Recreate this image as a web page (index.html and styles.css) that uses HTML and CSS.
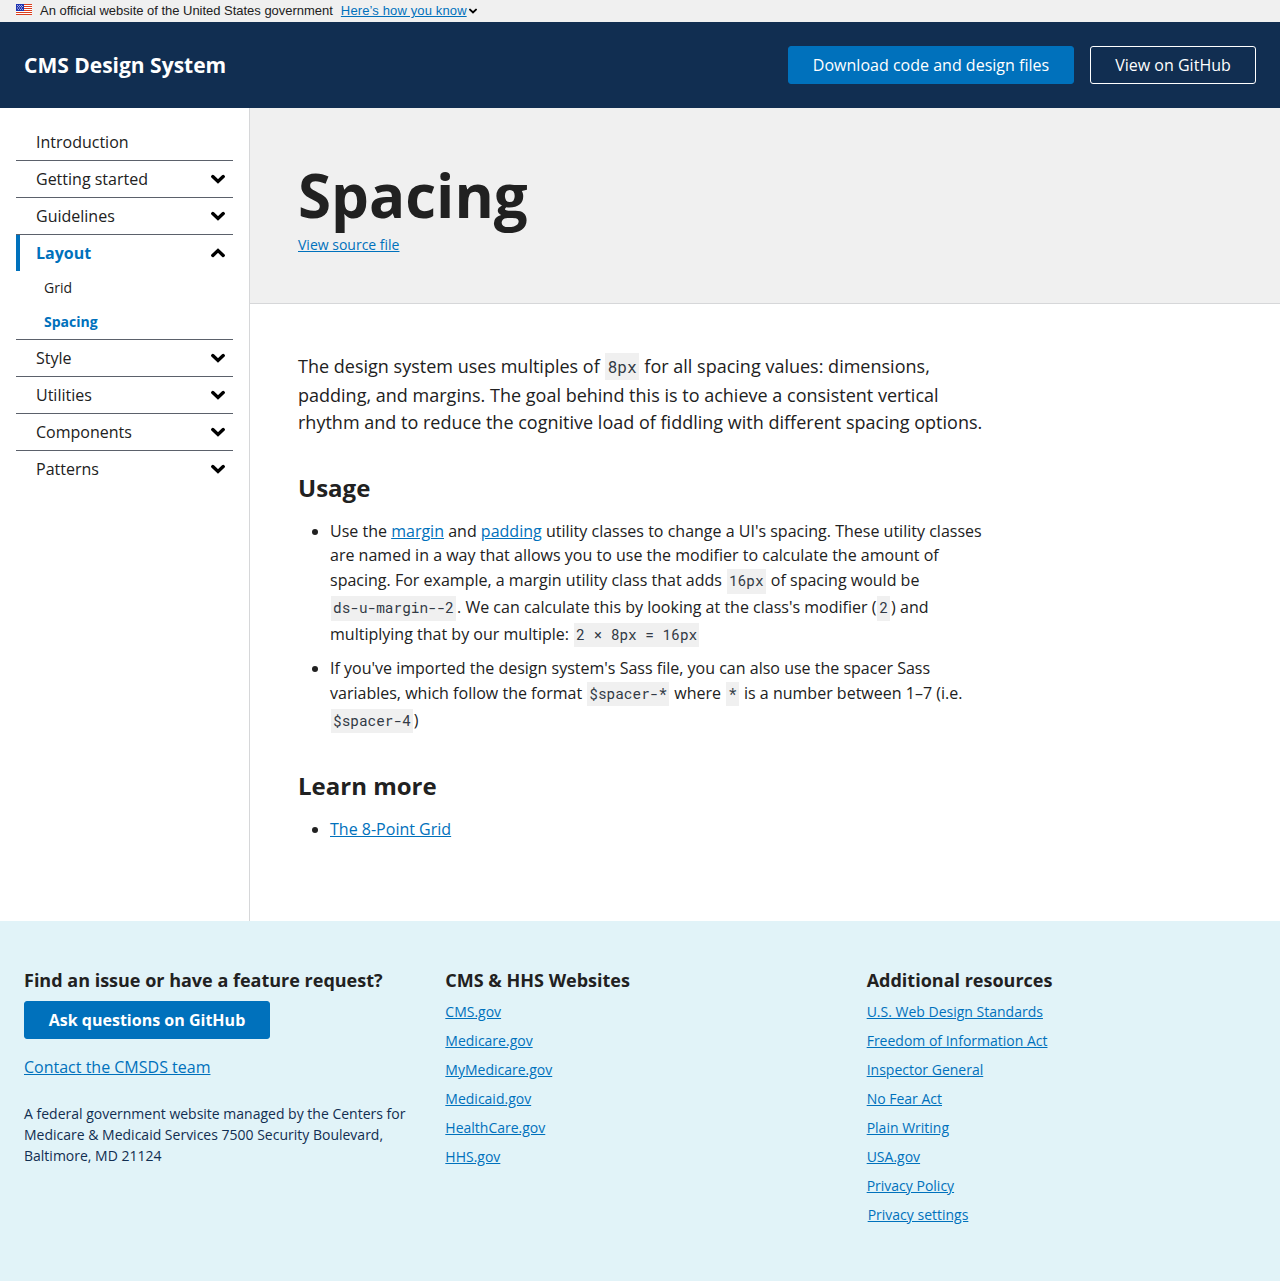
FILE: index.html
```html
<!DOCTYPE html>
<html lang="en">
<head>
<meta charset="utf-8">
<title>Spacing - CMS Design System</title>
<link rel="stylesheet" href="styles.css">
</head>
<body>
<svg class="sprite" aria-hidden="true"><symbol id="chevron" viewBox="0 0 14 16"><path fill="none" stroke="#000" stroke-width="3.4" stroke-linecap="round" stroke-linejoin="miter" d="M1.8 5.6 7 10.4l5.2-4.8"/></symbol></svg>
<div class="banner">
  <svg class="flag" viewBox="0 0 16 11"><path fill="#fff" d="M0 0h16v11H0z"/><path stroke="#db3e1f" d="M0 .5h16M0 2.5h16M0 4.5h16M0 6.5h16M0 8.5h16M0 10.5h16"/><path fill="#1e33b1" d="M0 0h8v7H0z"/><path fill="#fff" d="M1 1h.8v.8H1zM3 1h.8v.8H3zM5 1h.8v.8H5zM2 2.3h.8v.8H2zM4 2.3h.8v.8H4zM6 2.3h.8v.8H6zM1 3.6h.8v.8H1zM3 3.6h.8v.8H3zM5 3.6h.8v.8H5zM2 5h.8v.8H2zM4 5h.8v.8H4zM6 5h.8v.8H6z"/></svg>
  <span class="official">An official website of the United States government</span>
  <a href="#" class="know">Here’s how you know</a>
  <svg class="caret"><use href="#chevron"/></svg>
</div>
<header class="header">
  <span class="brand">CMS Design System</span>
  <div class="actions"><a class="button solid" href="#">Download code and design files</a><a class="button ghost" href="#">View on GitHub</a></div>
</header>
<div class="body">
  <nav class="nav">
    <a class="item">Introduction</a>
    <a class="item">Getting started<svg><use href="#chevron"/></svg></a>
    <a class="item">Guidelines<svg><use href="#chevron"/></svg></a>
    <a class="item current">Layout<svg class="up"><use href="#chevron"/></svg></a>
    <div class="sub"><a>Grid</a><a class="active">Spacing</a></div>
    <a class="item">Style<svg><use href="#chevron"/></svg></a>
    <a class="item">Utilities<svg><use href="#chevron"/></svg></a>
    <a class="item">Components<svg><use href="#chevron"/></svg></a>
    <a class="item">Patterns<svg><use href="#chevron"/></svg></a>
  </nav>
  <main class="main">
    <div class="hero"><h1>Spacing</h1><a class="source" href="#">View source file</a></div>
    <article class="content">
      <p class="lead">The design system uses multiples of <code>8px</code> for all spacing values: dimensions,<br>padding, and margins. The goal behind this is to achieve a consistent vertical<br>rhythm and to reduce the cognitive load of fiddling with different spacing options.</p>
      <h2>Usage</h2>
      <ul>
        <li>Use the <a href="#">margin</a> and <a href="#">padding</a> utility classes to change a UI's spacing. These utility classes<br>are named in a way that allows you to use the modifier to calculate the amount of<br>spacing. For example, a margin utility class that adds <code>16px</code> of spacing would be<br><code>ds-u-margin--2</code>. We can calculate this by looking at the class's modifier (<code>2</code>) and<br>multiplying that by our multiple: <code>2 × 8px = 16px</code></li>
        <li>If you've imported the design system's Sass file, you can also use the spacer Sass<br>variables, which follow the format <code>$spacer-*</code> where <code>*</code> is a number between 1–7 (i.e.<br><code>$spacer-4</code>)</li>
      </ul>
      <h2>Learn more</h2>
      <ul><li><a href="#">The 8-Point Grid</a></li></ul>
    </article>
  </main>
</div>
<footer class="footer">
  <section><h3>Find an issue or have a feature request?</h3><a class="button solid ask" href="#">Ask questions on GitHub</a><a class="contact" href="#">Contact the CMSDS team</a><p>A federal government website managed by the Centers for Medicare &amp; Medicaid Services 7500 Security Boulevard, Baltimore, MD 21124</p></section>
  <section class="links"><h3>CMS &amp; HHS Websites</h3><a href="#">CMS.gov</a><a href="#">Medicare.gov</a><a href="#">MyMedicare.gov</a><a href="#">Medicaid.gov</a><a href="#">HealthCare.gov</a><a href="#">HHS.gov</a></section>
  <section class="links"><h3>Additional resources</h3><a href="#">U.S. Web Design Standards</a><a href="#">Freedom of Information Act</a><a href="#">Inspector General</a><a href="#">No Fear Act</a><a href="#">Plain Writing</a><a href="#">USA.gov</a><a href="#">Privacy Policy</a><a href="#" class="settings">Privacy settings</a></section>
</footer>
</body>
</html>
```
FILE: styles.css
```css
* { box-sizing: border-box; }
body { margin: 0; color: #212121; font: 16px/24px "Open Sans", sans-serif; background: #fff; }
a { color: #0071bc; }
.sprite { display: none; }
.banner { height: 22px; padding: 0 16px; background: #f0f0f0; display: flex; align-items: center; font: 13px/20px "Liberation Sans", sans-serif; }
.flag { width: 16px; height: 11px; margin: 0 8px 3px 0; }
.official { letter-spacing: -0.02px; }
.know { margin-left: 8px; letter-spacing: 0.13px; }
.caret { width: 8px; height: 10px; margin-left: 2px; }
.header { height: 86px; padding: 0 24px; background: #112e51; display: flex; align-items: center; justify-content: space-between; }
.brand { color: #fff; font-size: 21px; font-weight: 700; }
.actions { display: flex; gap: 16px; }
.button { display: block; height: 38px; padding: 6px 0; border: 1px solid #0071bc; border-radius: 3px; color: #fff; text-align: center; text-decoration: none; white-space: nowrap; letter-spacing: 0.01px; }
.solid { width: 286px; background: #0071bc; }
.ghost { width: 166px; border-color: #fff; }
.body { display: flex; height: 813px; }
.nav { width: 250px; flex: none; padding: 16px 16px 0; border-right: 1px solid #d6d7d9; }
.item { height: 37px; padding: 0 8px 0 20px; display: flex; align-items: center; justify-content: space-between; border-bottom: 1px solid #5b616b; color: #212121; }
.item:last-child { height: 36px; border-bottom: 0; }
.item svg { width: 14px; height: 16px; }
.item .up { transform: rotate(180deg); }
.item.current { height: 36px; padding-left: 16px; border-left: 4px solid #0071bc; border-bottom: 0; color: #0071bc; font-weight: 700; }
.sub { height: 69px; border-bottom: 1px solid #5b616b; padding-left: 28px; font-size: 14px; }
.sub a { display: block; height: 34px; line-height: 34px; color: #212121; }
.sub .active { color: #0071bc; font-weight: 700; }
.main { flex: 1; }
.hero { height: 196px; background: #f0f0f0; border-bottom: 1px solid #d6d7d9; padding: 48px; }
h1 { margin: 0; font-size: 60px; line-height: 78px; font-weight: 700; }
.source { display: block; font-size: 14px; line-height: 21px; }
.content { padding: 48px; }
.lead { margin: 0; font-size: 18px; line-height: 27px; letter-spacing: 0.008px; }
code { display: inline-block; font: 0.9em/1.3 "Roboto Mono", "DejaVu Sans Mono", monospace; background: #f0f0f0; padding: 3px 2px; margin: 1.75px 1px 0.5px; color: #323a45; }
.lead code { margin: 1px 1px 2px; }
h2 { font-size: 24px; line-height: 31px; margin: 36px 0 16px; }
ul { margin: 0; padding-left: 32px; letter-spacing: 0.008px; }
li { margin-bottom: 8px; }
.footer { height: 360px; padding: 48px 24px; background: #e1f3f8; display: grid; grid-template-columns: repeat(3, 1fr); column-gap: 32px; }
h3 { margin: 0; font-size: 18px; line-height: 23px; }
.ask { width: 246px; margin-top: 9px; font-weight: 700; }
.contact { display: block; margin-top: 16px; }
.footer p { color: #112e51; font-size: 14px; line-height: 21px; margin: 24px 0 0; }
.links h3 { margin-bottom: 9px; }
.links a { display: block; width: max-content; font-size: 14px; line-height: 21px; margin-bottom: 8px; }
.links .settings { margin-left: 1px; }
```
